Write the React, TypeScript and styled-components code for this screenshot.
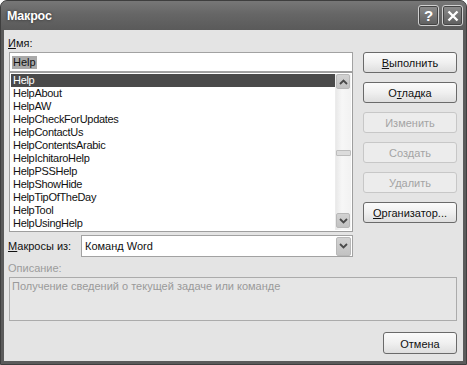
import React from "react";
import styled, { createGlobalStyle } from "styled-components";

const GlobalStyle = createGlobalStyle`
  html, body { margin: 0; padding: 0; background: #ffffff; }
  body {
    width: 467px; height: 365px; overflow: hidden;
    font-family: "Liberation Sans", Arial, sans-serif;
    font-size: 11px; color: #111;
  }
  * { box-sizing: border-box; }
`;

const Window = styled.div`
  width: 467px;
  height: 365px;
  display: flex;
  flex-direction: column;
  border: 1px solid #3e3e3e;
  border-radius: 7px 7px 0 0;
  background: #5b5b5b;
  overflow: hidden;
`;

const TitleBar = styled.div`
  height: 29px;
  flex: none;
  display: flex;
  align-items: center;
  justify-content: space-between;
  padding: 0 3px 0 6px;
  background: linear-gradient(#777 0%, #666 45%, #5a5a5a 100%);
`;

const Title = styled.div`
  font-family: "Liberation Sans", Arial, sans-serif;
  font-weight: bold;
  font-size: 12.5px;
  color: #fff;
  letter-spacing: -0.2px;
  text-shadow: 0 0 3px rgba(0, 0, 0, 0.6);
`;

const TitleButtons = styled.div`
  display: flex;
  gap: 3px;
`;

const TitleButton = styled.div`
  width: 21px;
  height: 21px;
  border: 1px solid #d0d0d0;
  border-radius: 3px;
  box-shadow: inset 0 0 0 1px #444;
  background: linear-gradient(#8c8c8c, #5e5e5e);
  display: flex;
  align-items: center;
  justify-content: center;
  color: #fff;
  font-weight: bold;
  font-size: 15px;
  font-family: "Liberation Sans", Arial, sans-serif;
`;

const Frame = styled.div`
  flex: 1;
  display: flex;
  padding: 0 3px 3px;
`;

const Client = styled.div`
  flex: 1;
  background: #e4e4e4;
  display: grid;
  grid-template-columns: 344px 94px;
  column-gap: 10px;
  align-content: start;
  padding: 7px 6px 7px 5px;
`;

const Label = styled.div<{ $muted?: boolean; $span?: boolean }>`
  height: 13px;
  line-height: 13px;
  margin-left: -1px;
  color: ${(p) => (p.$muted ? "#9c9c9c" : "#111")};
  grid-column: ${(p) => (p.$span ? "1 / 3" : "1")};
  u { text-decoration: underline; text-underline-offset: 1px; }
`;

const NameLabel = styled(Label)`
  margin-bottom: 2px;
`;

const LeftCol = styled.div`
  grid-column: 1;
  display: flex;
  flex-direction: column;
`;

const RightCol = styled.div`
  grid-column: 2;
  display: flex;
  flex-direction: column;
  gap: 9px;
`;

const NameInput = styled.div`
  height: 20px;
  background: #fff;
  border: 1px solid #a2a2a2;
  padding: 3px 2px 0;
`;

const Highlight = styled.span`
  display: inline-block;
  height: 13px;
  line-height: 13px;
  background: #a9a9a9;
  padding: 0 1px;
`;

const ListBox = styled.div`
  height: 160px;
  background: #fff;
  border: 1px solid #9e9e9e;
  padding: 1px;
  display: flex;
`;

const Rows = styled.div`
  flex: 1;
  display: flex;
  flex-direction: column;
`;

const Row = styled.div<{ $selected?: boolean }>`
  height: 13px;
  line-height: 13px;
  padding-left: 2px;
  white-space: nowrap;
  letter-spacing: -0.3px;
  background: ${(p) => (p.$selected ? "#4a4a4a" : "transparent")};
  color: ${(p) => (p.$selected ? "#fff" : "#111")};
`;

const ScrollBar = styled.div`
  width: 16px;
  display: flex;
  flex-direction: column;
  background: linear-gradient(90deg, #e9e9e9, #f7f7f7 40%, #f2f2f2);
  border-left: 1px solid #ececec;
  padding: 0 1px 2px 0;
`;

const ArrowBox = styled.div`
  width: 14px;
  height: 15px;
  background: linear-gradient(#d2d2d2, #c2c2c2);
  border: 1px solid #b8b8b8;
  border-radius: 2px;
  display: flex;
  align-items: center;
  justify-content: center;
`;

const Track = styled.div`
  flex: 1;
`;

const Thumb = styled.div`
  height: 6px;
  width: 15px;
  margin-top: 61px;
  background: #dcdcdc;
  border: 1px solid #bdbdbd;
  border-radius: 1px;
`;

const Button = styled.div<{ $disabled?: boolean; $width?: number; $height?: number }>`
  width: ${(p) => (p.$width ? `${p.$width}px` : "94px")};
  height: ${(p) => (p.$height ? `${p.$height}px` : "21px")};
  border: 1px solid ${(p) => (p.$disabled ? "#c7c7c7" : "#6a6a6a")};
  border-radius: 3px;
  background: ${(p) =>
    p.$disabled
      ? "#ececec"
      : "linear-gradient(#fbfbfb 0%, #f0f0f0 50%, #dedede 100%)"};
  color: ${(p) => (p.$disabled ? "#a4a4a4" : "#111")};
  display: flex;
  align-items: center;
  justify-content: center;
  padding-top: 1px;
  u { text-decoration: underline; text-underline-offset: 1px; }
`;

const MacrosRow = styled.div`
  grid-column: 1;
  margin-top: 3px;
  display: flex;
  align-items: center;
`;

const MacrosLabel = styled(Label)`
  width: 73px;
  flex: none;
`;

const Select = styled.div`
  flex: 1;
  height: 22px;
  background: #fff;
  border: 1px solid #a2a2a2;
  display: flex;
  align-items: center;
  justify-content: space-between;
  padding: 0 1px 0 3px;
`;

const SelectArrow = styled(ArrowBox)`
  width: 15px;
  height: 19px;
`;

const DescLabel = styled(Label)`
  margin-top: 5px;
`;

const DescBox = styled.div`
  grid-column: 1 / 3;
  height: 44px;
  margin-top: 2px;
  border: 1px solid #ababab;
  background: #e6e6e6;
  color: #9a9a9a;
  padding: 2px 2px;
  line-height: 13px;
`;

const Footer = styled.div`
  grid-column: 1 / 3;
  margin-top: 11px;
  display: flex;
  justify-content: flex-end;
`;

const Chevron = ({ up }: { up?: boolean }) => (
  <svg width="9" height="6" viewBox="0 0 9 6">
    <path
      d={up ? "M1 5 L4.5 1.5 L8 5" : "M1 1 L4.5 4.5 L8 1"}
      fill="none"
      stroke="#4a4a4a"
      strokeWidth="1.8"
    />
  </svg>
);

const CloseGlyph = () => (
  <svg width="12" height="12" viewBox="0 0 12 12">
    <path d="M1.5 1.5 L10.5 10.5 M10.5 1.5 L1.5 10.5" stroke="#fff" strokeWidth="2.4" />
  </svg>
);

const items = [
  "Help",
  "HelpAbout",
  "HelpAW",
  "HelpCheckForUpdates",
  "HelpContactUs",
  "HelpContentsArabic",
  "HelpIchitaroHelp",
  "HelpPSSHelp",
  "HelpShowHide",
  "HelpTipOfTheDay",
  "HelpTool",
  "HelpUsingHelp",
];

export default function App() {
  return (
    <>
      <GlobalStyle />
      <Window>
        <TitleBar>
          <Title>Макрос</Title>
          <TitleButtons>
            <TitleButton>?</TitleButton>
            <TitleButton>
              <CloseGlyph />
            </TitleButton>
          </TitleButtons>
        </TitleBar>
        <Frame>
          <Client>
            <NameLabel>
              <u>И</u>мя:
            </NameLabel>
            <LeftCol>
              <NameInput>
                <Highlight>Help</Highlight>
              </NameInput>
              <ListBox>
                <Rows>
                  {items.map((it, i) => (
                    <Row key={it} $selected={i === 0}>
                      {it}
                    </Row>
                  ))}
                </Rows>
                <ScrollBar>
                  <ArrowBox>
                    <Chevron up />
                  </ArrowBox>
                  <Track>
                    <Thumb />
                  </Track>
                  <ArrowBox>
                    <Chevron />
                  </ArrowBox>
                </ScrollBar>
              </ListBox>
            </LeftCol>
            <RightCol>
              <Button>
                <span>
                  <u>В</u>ыполнить
                </span>
              </Button>
              <Button>
                <span>
                  О<u>т</u>ладка
                </span>
              </Button>
              <Button $disabled>Изменить</Button>
              <Button $disabled>Создать</Button>
              <Button $disabled>Удалить</Button>
              <Button>
                <span>
                  <u>О</u>рганизатор...
                </span>
              </Button>
            </RightCol>
            <MacrosRow>
              <MacrosLabel>
                <u>М</u>акросы из:
              </MacrosLabel>
              <Select>
                <span>Команд Word</span>
                <SelectArrow>
                  <Chevron />
                </SelectArrow>
              </Select>
            </MacrosRow>
            <DescLabel $muted $span>
              Описание:
            </DescLabel>
            <DescBox>Получение сведений о текущей задаче или команде</DescBox>
            <Footer>
              <Button $width={74} $height={22}>
                Отмена
              </Button>
            </Footer>
          </Client>
        </Frame>
      </Window>
    </>
  );
}
